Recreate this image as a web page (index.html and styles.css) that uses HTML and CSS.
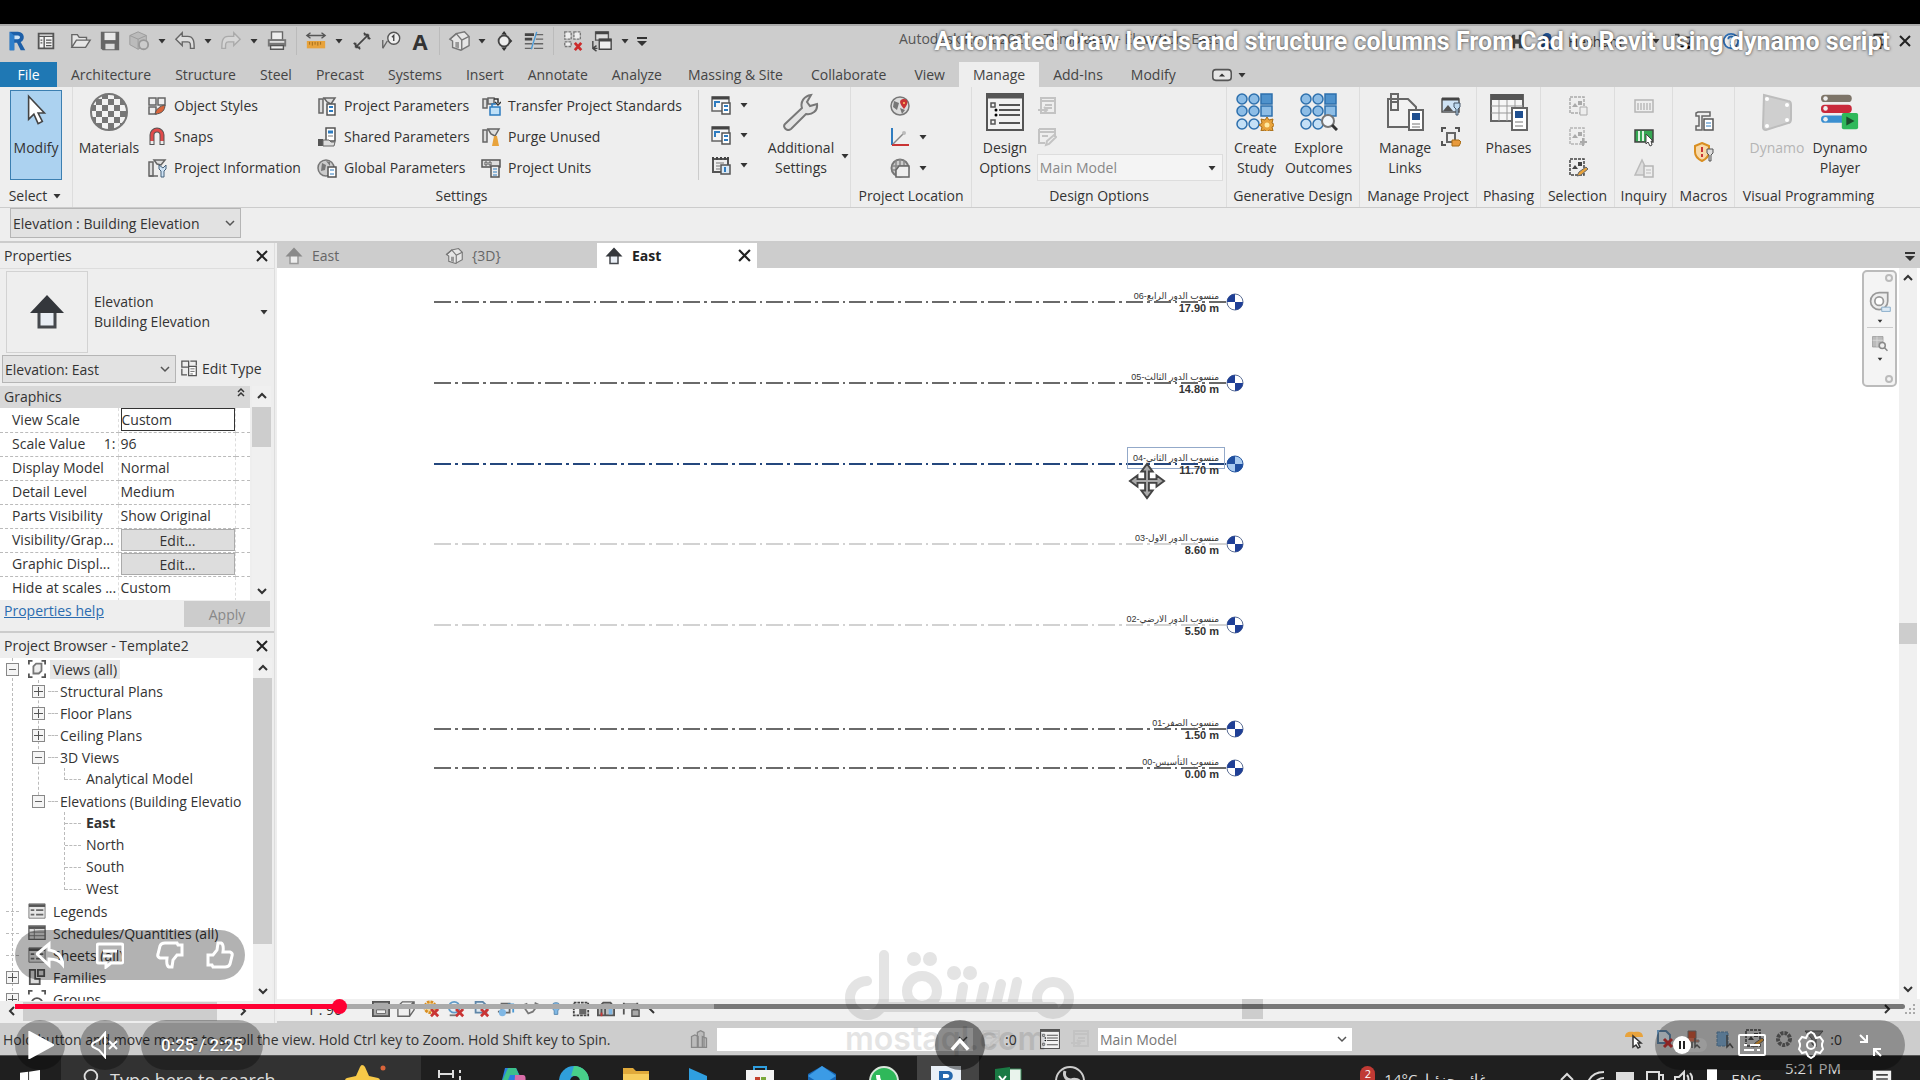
FILE: index.html
```html
<!DOCTYPE html>
<html lang="en">
  <head>
    <meta charset="utf-8">
    <title>Automated draw levels and structure columns From Cad to Revit using dynamo script</title>
    <link rel="stylesheet" href="styles.css">
  </head>
  <body>
    <!-- icon sprite -->
    <svg class="sprite" aria-hidden="true">
      <symbol id="i-caret" viewBox="0 0 12 12"><path d="M2.500 4h7L6 8.500z" fill="#333"/></symbol>
      <symbol id="i-down" viewBox="0 0 12 12"><path d="M2 4l4 4 4-4" fill="none" stroke="#555" stroke-width="1.500"/></symbol>
      <symbol id="i-sdown" viewBox="0 0 12 12"><path d="M2 4l4 4 4-4" fill="none" stroke="#333" stroke-width="2"/></symbol>
      <symbol id="i-sup" viewBox="0 0 12 12"><path d="M2 8l4-4 4 4" fill="none" stroke="#333" stroke-width="2"/></symbol>
      <symbol id="i-collapse" viewBox="0 0 12 12"><path d="M3 6l3-3 3 3M3 10l3-3 3 3" fill="none" stroke="#333" stroke-width="1.500"/></symbol>
      <symbol id="i-sleft" viewBox="0 0 12 12"><path d="M8 2L4 6l4 4" fill="none" stroke="#333" stroke-width="2"/></symbol>
      <symbol id="i-sright" viewBox="0 0 12 12"><path d="M4 2l4 4-4 4" fill="none" stroke="#333" stroke-width="2"/></symbol>
      <symbol id="i-x" viewBox="0 0 12 12"><path d="M1 1l10 10M11 1L1 11" fill="none" stroke="#222" stroke-width="2"/></symbol>
      <symbol id="i-r" viewBox="0 0 24 24"><path d="M4 2h9c8 0 8 10 3 11l5 9h-5l-4-8H9v8H4z" fill="#1d5fa8"/><path d="M9 6h4c3 0 3 4 0 4H9z" fill="#cfe3f5"/><path d="M4 2l5 4v16H4z" fill="#2f7fcb"/></symbol>
      <symbol id="i-panel" viewBox="0 0 24 24"><path d="M4 4h16v16H4z" fill="#f4f4f4" stroke="#555" stroke-width="2"/><path d="M4 7h16M10 7v13M12 11h6M12 14h6M12 17h6M6 11h2M6 14h2" stroke="#555" stroke-width="1.500"/></symbol>
      <symbol id="i-open" viewBox="0 0 24 24"><path d="M2 19V5h6l2 3h8v3M2 19l5-8h15l-5 8z" fill="#e6e6e6" stroke="#666" stroke-width="1.500"/></symbol>
      <symbol id="i-save" viewBox="0 0 24 24"><path d="M2 2h20v20H4l-2-2z" fill="#666"/><path d="M6 3h12v8H6z" fill="#e9e9e9"/><path d="M7 15h10v6H7z" fill="#ddd"/></symbol>
      <symbol id="i-sync" viewBox="0 0 24 24"><path d="M11 2l9 4v10l-9 5-9-5V6z" fill="#bbb" stroke="#999"/><path d="M2 6l9 4 9-4M11 10v11" fill="none" stroke="#999"/><circle cx="17" cy="16" r="5" fill="#ccc" stroke="#999" stroke-width="2"/></symbol>
      <symbol id="i-undo" viewBox="0 0 24 24"><path d="M2 10l7-7v4h6c7 0 7 7 7 13h-4c0-5 0-7-3-7H9v4z" fill="#ddd" stroke="#666" stroke-width="1.500"/></symbol>
      <symbol id="i-redo" viewBox="0 0 24 24"><path d="M22 10l-7-7v4H9c-7 0-7 7-7 13h4c0-5 0-7 3-7h6v4z" fill="#d6d6d6" stroke="#aaa" stroke-width="1.500"/></symbol>
      <symbol id="i-print" viewBox="0 0 24 24"><path d="M6 2h12v9H6z" fill="#eee" stroke="#666" stroke-width="1.500"/><path d="M2 10h20v8H2z" fill="#777"/><path d="M4 12h16v2H4z" fill="#ddd"/><path d="M5 17h14v4H5z" fill="#eee" stroke="#555" stroke-width="1.500"/></symbol>
      <symbol id="i-measure" viewBox="0 0 24 24"><path d="M2 6h20M6 3L2 6l4 3M18 3l4 3-4 3" fill="none" stroke="#555" stroke-width="1.500"/><path d="M2 12h20v8H2z" fill="#e8a33c"/><path d="M5 13v3M8 13v4M11 13v3M14 13v4M17 13v3" stroke="#9b6a1b"/></symbol>
      <symbol id="i-dim" viewBox="0 0 24 24"><path d="M5 19L19 5M14 3l7 7M3 14l7 7M19 5h-5M19 5v5M5 19h5M5 19v-5" fill="none" stroke="#444" stroke-width="1.800"/></symbol>
      <symbol id="i-tag" viewBox="0 0 24 24"><path d="M3 11v9M3 20l5-8" fill="none" stroke="#666" stroke-width="1.500"/><circle cx="15" cy="9" r="6.500" fill="#eee" stroke="#555" stroke-width="1.500"/><path d="M13 8l2-2v6" fill="none" stroke="#444" stroke-width="1.500"/></symbol>
      <symbol id="i-cube" viewBox="0 0 24 24"><path d="M3 8l8-5 10 4v10l-8 5-10-4z" fill="#e6e6e6" stroke="#777" stroke-width="1.500"/><path d="M3 8l10 4 8-5M13 12v10" fill="none" stroke="#777" stroke-width="1.500"/><path d="M14 13l6-4v8l-6 4z" fill="#999"/></symbol>
      <symbol id="i-house3d" viewBox="0 0 24 24"><path d="M2 10l7-6 9-2 5 5v10l-9 5-9-3v-7z" fill="#e6e6e6" stroke="#777" stroke-width="1.500"/><path d="M2 10l7-6 6 7v11M15 11l8-4" fill="none" stroke="#777" stroke-width="1.500"/><path d="M8 13h4v7l-4-1z" fill="#999"/></symbol>
      <symbol id="i-diamond" viewBox="0 0 24 24"><path d="M12 4l8 8-8 8z" fill="#333"/><circle cx="11" cy="12" r="6" fill="#eee" stroke="#444" stroke-width="2"/><path d="M11 1l3 4H8zM11 23l3-4H8z" fill="#333"/></symbol>
      <symbol id="i-thin" viewBox="0 0 24 24"><path d="M2 5h10M2 10h8" stroke="#444" stroke-width="3"/><path d="M2 15h8M2 20h8M14 5h8M14 10h8M12 15h10M12 20h10" stroke="#666" stroke-width="1.500"/><path d="M9 21l6-19" stroke="#4a9ad6" stroke-width="1.500"/></symbol>
      <symbol id="i-hide" viewBox="0 0 24 24"><path d="M3 2h7v8H3zM13 2h7v8h-7zM3 13h7v5H3z" fill="#eee" stroke="#777" stroke-width="1.500" stroke-dasharray="3 1"/><path d="M14 14l7 8M21 14l-7 8" stroke="#cc2b2b" stroke-width="3"/></symbol>
      <symbol id="i-switch" viewBox="0 0 24 24"><path d="M5 2h14v9H5z" fill="#ddd" stroke="#555" stroke-width="1.500"/><path d="M9 10h13v11H9z" fill="#eee" stroke="#444" stroke-width="1.500"/><path d="M9 11h13M5 3h14" stroke="#444" stroke-width="3"/><path d="M2 12v8h5M2 20l4-3M2 20l4 3" fill="none" stroke="#444" stroke-width="1.500"/></symbol>
      <symbol id="i-custom" viewBox="0 0 12 12"><path d="M1 2h10v2H1zM1 6h10L6 11z" fill="#333"/></symbol>
      <symbol id="i-cursor" viewBox="0 0 24 36"><path d="M5 3v22l5-5 4 9 4-2-4-8h6z" fill="#fff" stroke="#444" stroke-width="1.500"/></symbol>
      <symbol id="i-sphere" viewBox="0 0 38 38"><defs><pattern id="chk" width="12" height="12" patternUnits="userSpaceOnUse"><path d="M0 0h12v12H0z" fill="#f3f3f3"/><path d="M0 0h6v6H0zM6 6h6v6H6z" fill="#777"/></pattern></defs><circle cx="19" cy="19" r="18" fill="url(#chk)" stroke="#777" stroke-width="2"/></symbol>
      <symbol id="i-objstyles" viewBox="0 0 20 20"><path d="M2 2h7v7H2zM11 2h7v7h-7zM2 11h7v7H2z" fill="#eee" stroke="#666" stroke-width="1.500"/><path d="M8 18c1-5 5-8 10-9 0 5-3 9-10 9z" fill="#d9643a" stroke="#555"/></symbol>
      <symbol id="i-snaps" viewBox="0 0 20 20"><path d="M5 18V8a5 5 0 0 1 10 0v10" fill="none" stroke="#555" stroke-width="5"/><path d="M5 14V8a5 5 0 0 1 10 0v6" fill="none" stroke="#e04a4a" stroke-width="3"/><path d="M5 14v3M15 14v3" stroke="#eee" stroke-width="3"/></symbol>
      <symbol id="i-doc" viewBox="0 0 20 20"><path d="M2 3h4v14H2zM7 2h11l-4 6-4-2z" fill="#ddd" stroke="#666" stroke-width="1.500"/><path d="M10 8h8v11h-8z" fill="#fff" stroke="#555" stroke-width="1.500"/><path d="M12 11h4M12 15h4" stroke="#2e7cc0" stroke-width="2"/></symbol>
      <symbol id="i-info" viewBox="0 0 20 20"><path d="M2 4h4v14H2zM7 2h11l-4 5-4-1z" fill="#ddd" stroke="#666" stroke-width="1.500"/><path d="M2 18h9" stroke="#666" stroke-width="1.500"/><path d="M12 7v4l2 2v6h3v-6l2-2V7l-3 3z" fill="#cfe3f5" stroke="#44607a"/></symbol>
      <symbol id="i-shared" viewBox="0 0 20 20"><path d="M9 1h9v13H9z" fill="#fff" stroke="#555" stroke-width="1.500"/><path d="M11 5h5" stroke="#2e7cc0" stroke-width="3"/><path d="M11 9h5" stroke="#777"/><path d="M1 12h5v7H1z" fill="#555"/><path d="M6 13h6l2 2h4l-1 4H6z" fill="#ddd" stroke="#666"/></symbol>
      <symbol id="i-global" viewBox="0 0 20 20"><circle cx="9" cy="10" r="8" fill="#ccc" stroke="#777" stroke-width="1.500"/><path d="M5 5l4 2-1 5-4 1zM9 3l4 1v4z" fill="#777"/><path d="M11 9h8v10h-8z" fill="#fff" stroke="#555" stroke-width="1.500"/><path d="M13 12h4M13 16h4" stroke="#2e7cc0"/></symbol>
      <symbol id="i-transfer" viewBox="0 0 20 20"><path d="M2 3h4v9H2zM7 2h6v6H7z" fill="#ddd" stroke="#666" stroke-width="1.500"/><path d="M13 3h4v4M14 6l3 3 3-3" fill="none" stroke="#333" stroke-width="1.500"/><path d="M9 11h10v8H9zM11 11V8h4" fill="#bfe0f7" stroke="#2e7cc0" stroke-width="1.500"/></symbol>
      <symbol id="i-purge" viewBox="0 0 20 20"><path d="M2 3h4v12H2zM7 2h11l-4 7-4-2z" fill="#ddd" stroke="#666" stroke-width="1.500"/><path d="M13 9h3l2 10h-7z" fill="#e8a33c"/></symbol>
      <symbol id="i-units" viewBox="0 0 20 20"><path d="M1 2h18v7H1z" fill="#ddd" stroke="#555" stroke-width="1.500"/><path d="M4 4v3h2V4zM8 4v3h2V4z" fill="#fff" stroke="#555"/><path d="M10 8h8v11h-8z" fill="#eee" stroke="#555" stroke-width="1.500"/><path d="M12 11h4M12 14h4M12 17h4" stroke="#2e7cc0"/></symbol>
      <symbol id="i-struct" viewBox="0 0 20 20"><path d="M1 2h17v14H1z" fill="#f5f5f5" stroke="#666" stroke-width="1.500"/><path d="M1 3h17" stroke="#444" stroke-width="3"/><path d="M4 12V7h5" fill="none" stroke="#2e7cc0" stroke-width="2"/><path d="M11 8h8v11h-8z" fill="#fff" stroke="#555" stroke-width="1.500"/><path d="M13 11h4M13 15h4" stroke="#2e7cc0" stroke-width="2"/></symbol>
      <symbol id="i-grid" viewBox="0 0 20 20"><path d="M2 4h15v13H2z" fill="#eee" stroke="#555" stroke-width="2"/><path d="M2 2v3M6 2v3M10 2v3M14 2v3M17 2v3" stroke="#444" stroke-width="2"/><path d="M5 8h8M5 11h4M5 14h4" stroke="#777"/><path d="M10 10h9v9h-9z" fill="#dbe9f5" stroke="#555" stroke-width="1.500"/><path d="M14 12v5" stroke="#2e7cc0" stroke-width="2"/></symbol>
      <symbol id="i-wrench" viewBox="0 0 38 38"><path d="M3 31l17-16c-2-6 2-12 9-13l-4 7 3 4 7-2c1 7-5 11-11 10L9 36c-4 3-9-2-6-5z" fill="#e4e4e4" stroke="#777" stroke-width="2"/></symbol>
      <symbol id="i-globe" viewBox="0 0 20 20"><circle cx="10" cy="10" r="9" fill="#ddd" stroke="#777" stroke-width="1.500"/><path d="M4 5l5 2-2 7-4-3zM10 12l5 2-3 4z" fill="#777"/><path d="M14 13c-7-8-3-10 0-10s6 3 0 10z" fill="#c93434"/><circle cx="14" cy="7" r="1" fill="#fc6"/></symbol>
      <symbol id="i-coord" viewBox="0 0 20 20"><path d="M2 1v17" stroke="#2e7cc0" stroke-width="2"/><path d="M2 18h17" stroke="#c93434" stroke-width="2"/><path d="M3 17L14 6" stroke="#888" stroke-width="1.500"/><circle cx="14" cy="6" r="2" fill="#bbb"/></symbol>
      <symbol id="i-position" viewBox="0 0 20 20"><circle cx="10" cy="10" r="8.500" fill="#ccc" stroke="#777" stroke-width="2"/><path d="M2 8h16M2 12h5M10 1v7M6 2v16M14 2v6" stroke="#888" stroke-width="1.500"/><path d="M6 12l3-4h10v11H6z" fill="#eee" stroke="#666" stroke-width="1.500"/></symbol>
      <symbol id="i-options" viewBox="0 0 38 38"><path d="M1 1h36v36H1z" fill="#f2f2f2" stroke="#555" stroke-width="2"/><path d="M1 3h36" stroke="#555" stroke-width="5"/><path d="M13 12h21M13 17h21M13 22h21M13 30h21" stroke="#555" stroke-width="2"/><path d="M5 10h4v4H5zM5 27h4v4H5z" fill="none" stroke="#555" stroke-width="1.500"/><circle cx="10" cy="17" r="1.500"/><circle cx="10" cy="22" r="1.500"/></symbol>
      <symbol id="i-addset" viewBox="0 0 20 20"><path d="M4 2h14v15H4zM4 5h14M8 9h7M8 12h7M1 14h8M7 11l3 3-3 3" fill="none" stroke="#c3c3c3" stroke-width="2"/></symbol>
      <symbol id="i-pick" viewBox="0 0 20 20"><path d="M2 2h16v8M2 2v14h6M2 5h16M5 9h6M9 18l1-4 7-6 2 2-7 7z" fill="none" stroke="#c3c3c3" stroke-width="2"/></symbol>
      <symbol id="i-dots" viewBox="0 0 38 38"><g fill="#8dbde6" stroke="#2e70ad" stroke-width="1.500"><circle cx="6" cy="6" r="5"/><circle cx="18" cy="6" r="5"/><path d="M25 1h11v10H25z" fill="#4f92cc"/><circle cx="6" cy="18" r="5"/><circle cx="18" cy="18" r="5"/><path d="M25 13h11v10H25z"/><circle cx="6" cy="31" r="5" fill="#c4e0f6"/><circle cx="18" cy="31" r="5" fill="#c4e0f6"/></g></symbol>
      <symbol id="i-create" viewBox="0 0 38 38"><use href="#i-dots"/><path d="M31 24l2 3 4-1-1 4 3 2-3 2 1 4-4-1-2 3-2-3-4 1 1-4-3-2 3-2-1-4 4 1z" fill="#e8a33c" stroke="#a66a12"/><circle cx="31" cy="32" r="2.500" fill="#ffeaa0"/></symbol>
      <symbol id="i-explore" viewBox="0 0 38 38"><use href="#i-dots"/><circle cx="28" cy="28" r="6" fill="#f2f6fa" stroke="#777" stroke-width="2"/><path d="M32 32l5 5" stroke="#333" stroke-width="3"/></symbol>
      <symbol id="i-links" viewBox="0 0 38 38"><path d="M2 6h20l8 8v20H2z" fill="#f2f2f2" stroke="#666" stroke-width="2"/><path d="M5 1h7v8H5zM5 9h7v8H5z" fill="none" stroke="#666" stroke-width="2"/><path d="M23 17h14v20H23z" fill="#fff" stroke="#666" stroke-width="2"/><path d="M26 20h8v7h-8z" fill="#1f4f8f"/><path d="M26 31h8M26 34h8" stroke="#777"/></symbol>
      <symbol id="i-image" viewBox="0 0 20 20"><path d="M1 3h17v13H1z" fill="#cfe3f5" stroke="#555" stroke-width="1.500"/><path d="M1 3h17" stroke="#444" stroke-width="3"/><path d="M2 15l5-6 5 6z" fill="#555"/><path d="M13 7v4l2 2v6h2v-6l2-2V7z" fill="#bcd8ef" stroke="#456"/></symbol>
      <symbol id="i-decal" viewBox="0 0 20 20"><path d="M1 5V1h4M14 1h4v4M1 14v4h4" fill="none" stroke="#555" stroke-width="2"/><path d="M6 6h8v9H6z" fill="#eee" stroke="#666" stroke-width="2"/><path d="M11 13h7l2 2-2 4h-7z" fill="#e89a3c" stroke="#a66a12"/></symbol>
      <symbol id="i-phases" viewBox="0 0 38 38"><path d="M1 2h32v26H1z" fill="#f6f6f6" stroke="#666" stroke-width="2"/><path d="M1 4h32" stroke="#555" stroke-width="6"/><path d="M1 13h32M1 20h32M9 7v21M17 7v21M25 7v21" stroke="#999"/><path d="M22 15h15v22H22z" fill="#fff" stroke="#666" stroke-width="2"/><path d="M25 18h8v7h-8z" fill="#1f4f8f"/><path d="M25 29h8M25 33h8" stroke="#777"/></symbol>
      <symbol id="i-sel" viewBox="0 0 20 20"><path d="M2 1h14v16H2z" fill="none" stroke="#aaa" stroke-width="1.500" stroke-dasharray="3 1"/><path d="M4 11l3-4 3 4zM10 5h4v4h-4z" fill="#aaa"/><path d="M12 11h7v8h-7z" fill="#eee" stroke="#aaa"/></symbol>
      <symbol id="i-selload" viewBox="0 0 20 20"><path d="M2 1h14v16H2z" fill="none" stroke="#b5b5b5" stroke-width="1.500" stroke-dasharray="3 1"/><path d="M4 11l3-4 3 4zM10 5h4v4h-4z" fill="#aaa"/><path d="M15 11v8M12 15h7" stroke="#aaa" stroke-width="2"/></symbol>
      <symbol id="i-seledit" viewBox="0 0 20 20"><path d="M2 1h14v16H2z" fill="none" stroke="#444" stroke-width="1.500" stroke-dasharray="3 1"/><path d="M4 11l3-4 3 4zM10 4h4v4h-4z" fill="#444"/><path d="M9 18l2-4 7-5 2 2-7 6z" fill="#e8a33c" stroke="#666"/></symbol>
      <symbol id="i-ids" viewBox="0 0 20 20"><path d="M1 4h18v12H1z" fill="#eee" stroke="#b5b5b5" stroke-width="1.500"/><path d="M4 7v7M7 7v7M10 7v7M13 7v7M16 7v7" stroke="#bbb" stroke-width="1.500"/></symbol>
      <symbol id="i-idsel" viewBox="0 0 20 20"><path d="M1 3h18v12H1z" fill="#35a853" stroke="#444" stroke-width="1.500"/><path d="M5 4v10M9 4v10" stroke="#dff3e4" stroke-width="2"/><path d="M12 7v10l2-2 2 4 2-1-1-4h2z" fill="#fff" stroke="#444"/></symbol>
      <symbol id="i-warn" viewBox="0 0 20 20"><path d="M1 17L8 2l7 15z" fill="#ddd" stroke="#bbb" stroke-width="1.500"/><path d="M10 8h9v11h-9z" fill="#eee" stroke="#b5b5b5" stroke-width="1.500"/><path d="M12 12h5M12 15h5" stroke="#bbb"/></symbol>
      <symbol id="i-script" viewBox="0 0 20 20"><path d="M4 1h12v4H8v14H2v-4h3V5H2V2z" fill="#eee" stroke="#666" stroke-width="1.500"/><path d="M10 8h9v11h-9z" fill="#fff" stroke="#555" stroke-width="1.500"/><path d="M12 12h5M12 15h5" stroke="#2e7cc0"/></symbol>
      <symbol id="i-shield" viewBox="0 0 20 20"><path d="M8 1l7 3v6c0 4-3 7-7 9-4-2-7-5-7-9V4z" fill="#f8d9a8" stroke="#d98f22" stroke-width="2"/><path d="M8 5v5M8 12v3" stroke="#c93434" stroke-width="2"/><path d="M13 7v4l2 2v6h2v-6l2-2V7z" fill="#ddd" stroke="#555"/></symbol>
      <symbol id="i-dynamo" viewBox="0 0 38 38"><path d="M6 2l24 6c2 0 3 2 3 4v14c0 2-1 4-3 4L8 37c-2 0-3-1-3-3z" fill="#cfcfcf" stroke="#bdbdbd" stroke-width="2"/><circle cx="9" cy="6" r="2" fill="#fff"/><circle cx="29" cy="12" r="2" fill="#fff"/><circle cx="9" cy="33" r="2" fill="#fff"/><circle cx="29" cy="27" r="2" fill="#fff"/></symbol>
      <symbol id="i-player" viewBox="0 0 42 38"><rect y="0" width="34" height="8" rx="4" fill="#7d7468"/><rect y="11" width="34" height="9" rx="4" fill="#c9283a"/><rect y="23" width="30" height="8" rx="4" fill="#3b8fd0"/><circle cx="5" cy="4" r="2.500" fill="#eee"/><circle cx="5" cy="15" r="2.500" fill="#eee"/><circle cx="5" cy="27" r="2.500" fill="#eee"/><rect x="23" y="20" width="18" height="18" rx="2" fill="#2fb85a"/><path d="M28 24l9 5-9 5z" fill="#1b4d2c"/></symbol>
      <symbol id="i-min" viewBox="0 0 26 18"><rect x="1" y="2" width="24" height="14" rx="4" fill="#e6e6e6" stroke="#555" stroke-width="2"/><path d="M9 11l4-4 4 4z" fill="#333"/></symbol>
      <symbol id="i-house" viewBox="0 0 36 36"><path d="M10 16h16v17H10z" fill="#e9eef5" stroke="#45484d" stroke-width="3"/><path d="M18 1l17 18H1z" fill="#34373c"/></symbol>
      <symbol id="i-house-g" viewBox="0 0 36 36"><path d="M10 16h16v17H10z" fill="#eee" stroke="#999" stroke-width="3"/><path d="M18 1l17 18H1z" fill="#8a8a8a"/></symbol>
      <symbol id="i-type" viewBox="0 0 20 20"><path d="M1 2h8v7H1zM11 2h7v5M1 11v7h6" fill="none" stroke="#555" stroke-width="1.500"/><path d="M9 8h9v11H9z" fill="#fff" stroke="#555" stroke-width="1.500"/><path d="M11 11h5M11 14h5M11 17h3" stroke="#555"/></symbol>
      <symbol id="i-views" viewBox="0 0 20 20"><path d="M1 5V1h4M15 1h4v4M1 15v4h4M15 19h4v-4" fill="none" stroke="#555" stroke-width="2"/><path d="M6 7l3-3h6v8l-3 3H6z" fill="#eee" stroke="#777" stroke-width="2"/></symbol>
      <symbol id="i-sheet" viewBox="0 0 20 20"><path d="M1 2h18v16H1z" fill="#e6e6e6" stroke="#777"/><path d="M1 4h18" stroke="#555" stroke-width="3"/><path d="M3 9h4M3 14h4M9 9h8M9 14h8" stroke="#666" stroke-width="2"/></symbol>
      <symbol id="i-sched" viewBox="0 0 20 20"><path d="M1 2h18v15H1z" fill="#ddd" stroke="#666" stroke-width="1.500"/><path d="M1 4h18" stroke="#555" stroke-width="3"/><path d="M1 9h18M1 13h18M7 5v12" stroke="#777"/></symbol>
      <symbol id="i-fam" viewBox="0 0 20 20"><path d="M2 2h6v10h5v6H2zM11 2h7v7h-7z" fill="#ddd" stroke="#555" stroke-width="2"/></symbol>
      <symbol id="i-group" viewBox="0 0 20 20"><path d="M1 5V1h4M15 1h4v4M4 15a6 6 0 0 1 12 0" fill="none" stroke="#555" stroke-width="2"/></symbol>
      <symbol id="i-bubble" viewBox="0 0 18 18"><circle cx="9" cy="9" r="8" fill="#fff" stroke="#5d6f95"/><path d="M9 9V1a8 8 0 0 0-8 8zM9 9v8a8 8 0 0 0 8-8z" fill="#1f3f96"/></symbol>
      <symbol id="i-bubble-on" viewBox="0 0 18 18"><circle cx="9" cy="9" r="8" fill="#a9cbf0" stroke="#2b5aa0"/><path d="M9 9V1a8 8 0 0 0-8 8zM9 9v8a8 8 0 0 0 8-8z" fill="#1f4fa0"/></symbol>
      <symbol id="i-x2" viewBox="0 0 20 20"><path d="M4 2h8l4 4v8H4z" fill="#dfe8f0" stroke="#5f86a8" stroke-width="2"/><path d="M10 10l8 8M18 10l-8 8" stroke="#c93434" stroke-width="3"/></symbol>
      <symbol id="i-shadow" viewBox="0 0 20 20"><circle cx="8" cy="8" r="6" fill="#e6eef5" stroke="#5f9bc8" stroke-width="2"/><path d="M3 17h8" stroke="#777" stroke-width="2"/><path d="M10 10l8 8M18 10l-8 8" stroke="#c93434" stroke-width="3"/></symbol>
      <symbol id="i-crop" viewBox="0 0 20 20"><path d="M1 13h4M5 4h9v10H5z" fill="#dfe8f0" stroke="#666" stroke-width="2"/><circle cx="6" cy="14" r="4" fill="#7fb7e4"/><path d="M12 5h6v9" fill="none" stroke="#4a9ad6" stroke-width="2"/></symbol>
      <symbol id="i-sun" viewBox="0 0 20 20"><circle cx="9" cy="8" r="6" fill="#f3d9a0" stroke="#d98f22" stroke-width="3" stroke-dasharray="3 1"/><path d="M10 10l8 8M18 10l-8 8" stroke="#c93434" stroke-width="3"/></symbol>
      <symbol id="i-box" viewBox="0 0 20 20"><path d="M1 7l5-5h13v9l-5 7H1zM1 7h13v11M14 7l5-5" fill="#eee" stroke="#666" stroke-width="1.500"/></symbol>
      <symbol id="i-film" viewBox="0 0 20 20"><path d="M1 2h18v16H1z" fill="#aaa" stroke="#555" stroke-width="2"/><path d="M5 5h10v4H5zM5 11h10v4H5z" fill="#eee" stroke="#666"/></symbol>
      <symbol id="i-glass" viewBox="0 0 20 20"><path d="M1 6l6 9 5-2 6-8-4-2M1 6l5-2" fill="none" stroke="#777" stroke-width="2"/></symbol>
      <symbol id="i-bulb" viewBox="0 0 20 20"><path d="M10 3c6 0 5 6 2 9v4H8v-4C5 9 4 3 10 3z" fill="#7fb7e4" stroke="#5585ad"/></symbol>
      <symbol id="i-temp" viewBox="0 0 20 20"><path d="M2 3h16v14H2z" fill="none" stroke="#444" stroke-width="2" stroke-dasharray="3 1"/><path d="M8 9h8v7H8z" fill="#666"/></symbol>
      <symbol id="i-persons" viewBox="0 0 22 24"><path d="M2 9l4-2 4 2v13H2zM9 4l4-2 4 2v18H9zM15 9l5 2v11h-5z" fill="#bbb" stroke="#888" stroke-width="1.500"/></symbol>
      <symbol id="i-analytic" viewBox="0 0 20 20"><path d="M1 9l6-6h8l4 5v9H1z" fill="#bbb" stroke="#555" stroke-width="2"/><path d="M5 8v9M9 6v11" stroke="#555" stroke-width="2"/><path d="M5 14v4" stroke="#c93434" stroke-width="2"/><path d="M13 9h4v7h-4z" fill="#7fb7e4"/></symbol>
      <symbol id="i-lock" viewBox="0 0 20 20"><path d="M2 3v13M2 5h15M17 3v5" fill="none" stroke="#555" stroke-width="2"/><path d="M11 11h8v7h-8zM13 11V8h4v3" fill="#aaa" stroke="#555" stroke-width="1.500"/></symbol>
      <symbol id="i-wheel" viewBox="0 0 28 28"><path d="M13 3h10v10a10 10 0 1 1-10-10z" fill="#eee" stroke="#999" stroke-width="2"/><circle cx="13" cy="13" r="5" fill="#fff" stroke="#999" stroke-width="2"/><path d="M16 20h10v5H16z" fill="#dbe9f5" stroke="#7fa6c6"/></symbol>
      <symbol id="i-zoomreg" viewBox="0 0 24 24"><path d="M2 2h14v14H2z" fill="#bbb" stroke="#999"/><path d="M2 7h14M8 2v14" stroke="#ddd"/><circle cx="15" cy="14" r="4" fill="#eee" stroke="#888" stroke-width="2"/><path d="M18 17l4 4" stroke="#888" stroke-width="2"/></symbol>
      <symbol id="i-move" viewBox="0 0 40 40"><path d="M20 2l6 8h-4v8h8v-4l8 6-8 6v-4h-8v8h4l-6 8-6-8h4v-8h-8v4l-8-6 8-6v4h8v-8h-4z" fill="#aaa" stroke="#444" stroke-width="2"/></symbol>
      <symbol id="i-drag" viewBox="0 0 20 20"><path d="M1 8c0-5 4-6 9-5 5-1 9 0 9 5z" fill="#e8a33c"/><path d="M9 7v11l3-2 2 3 2-1-2-4h3z" fill="#fff" stroke="#333" stroke-width="1.500"/></symbol>
      <symbol id="i-pin" viewBox="0 0 20 20"><path d="M4 2h8v9h3v2H2v-2h2z" fill="#c9583a" stroke="#777"/><path d="M8 13v6M11 9v9l2-2 3 3" stroke="#444" fill="none" stroke-width="1.500"/></symbol>
      <symbol id="i-face" viewBox="0 0 20 20"><path d="M3 3h11v14H3z" fill="#7fa9cf" stroke="#5f86a8" stroke-dasharray="3 1"/><path d="M13 6v12l3-3 3 4" fill="none" stroke="#555" stroke-width="1.500"/></symbol>
      <symbol id="i-gear" viewBox="0 0 20 20"><circle cx="10" cy="10" r="6" fill="none" stroke="#666" stroke-width="4" stroke-dasharray="3 1"/></symbol>
      <symbol id="i-funnel" viewBox="0 0 20 20"><path d="M1 2h18l-7 8v8l-4-3v-5z" fill="#888" stroke="#555"/></symbol>
    </svg>

    <div class="player">
      <div class="app">
        <header class="titlebar">
          <div class="qat">
            <svg><use href="#i-r"/></svg>
            <svg class="qat-first"><use href="#i-panel"/></svg>
            <svg><use href="#i-open"/></svg>
            <svg><use href="#i-save"/></svg>
            <svg><use href="#i-sync"/></svg>
            <svg class="caret"><use href="#i-caret"/></svg>
            <svg><use href="#i-undo"/></svg>
            <svg class="caret"><use href="#i-caret"/></svg>
            <svg><use href="#i-redo"/></svg>
            <svg class="caret"><use href="#i-caret"/></svg>
            <svg><use href="#i-print"/></svg>
            <i></i>
            <svg><use href="#i-measure"/></svg>
            <svg class="caret"><use href="#i-caret"/></svg>
            <svg><use href="#i-dim"/></svg>
            <svg><use href="#i-tag"/></svg>
            <b>A</b>
            <i></i>
            <svg><use href="#i-house3d"/></svg>
            <svg class="caret"><use href="#i-caret"/></svg>
            <svg><use href="#i-diamond"/></svg>
            <svg><use href="#i-thin"/></svg>
            <i></i>
            <svg><use href="#i-hide"/></svg>
            <svg><use href="#i-switch"/></svg>
            <svg class="caret"><use href="#i-caret"/></svg>
            <svg class="caret"><use href="#i-custom"/></svg>
          </div>
          <div class="window-title">Autodesk Revit 2021 - Template2 - Elevation: East</div>
          <div class="infocenter">
            <svg viewBox="0 0 20 20"><path d="M2 18V9l3-6h3v15zM12 18V3h3l3 6v9zM8 8h4v5H8z" fill="#444"/></svg>
            <svg viewBox="0 0 20 20"><circle cx="10" cy="6" r="5" fill="#1f4f8f"/><path d="M1 19c0-9 18-9 18 0z" fill="#1f4f8f"/></svg>
            <span>Hesham</span>
            <svg class="caret"><use href="#i-caret"/></svg>
            <svg viewBox="0 0 20 20"><path d="M1 3h4l3 10h9l2-7H6" fill="none" stroke="#444" stroke-width="2"/><circle cx="9" cy="17" r="2"/><circle cx="16" cy="17" r="2"/></svg>
            <svg class="help" viewBox="0 0 20 20"><circle cx="10" cy="10" r="8" fill="#eee" stroke="#2e6cb0" stroke-width="2"/><path d="M7 8c0-4 6-4 6 0 0 2-3 2-3 4M10 14v2" fill="none" stroke="#2e6cb0" stroke-width="2"/></svg>
            <svg class="win" viewBox="0 0 20 20"><path d="M3 7h11v11H3zM7 7V3h11v11h-4" fill="none" stroke="#333" stroke-width="2"/></svg>
            <svg class="close"><use href="#i-x"/></svg>
          </div>
        </header>

        <nav class="tabs">
          <button class="file">File</button>
          <button>Architecture</button>
          <button>Structure</button>
          <button>Steel</button>
          <button>Precast</button>
          <button>Systems</button>
          <button>Insert</button>
          <button>Annotate</button>
          <button>Analyze</button>
          <button>Massing &amp; Site</button>
          <button>Collaborate</button>
          <button>View</button>
          <button class="active">Manage</button>
          <button>Add-Ins</button>
          <button>Modify</button>
          <svg class="min"><use href="#i-min"/></svg>
          <svg class="caret"><use href="#i-caret"/></svg>
        </nav>

        <section class="ribbon">
          <div class="panel">
            <div class="tools"><button class="big modify"><svg><use href="#i-cursor"/></svg>Modify</button></div>
            <h2>Select <svg class="caret"><use href="#i-caret"/></svg></h2>
          </div>
          <div class="panel">
            <div class="tools settings">
              <button class="big"><svg><use href="#i-sphere"/></svg>Materials</button>
              <div class="stack first">
                <button><svg><use href="#i-objstyles"/></svg>Object Styles</button>
                <button><svg><use href="#i-snaps"/></svg>Snaps</button>
                <button><svg><use href="#i-info"/></svg>Project Information</button>
              </div>
              <div class="stack">
                <button><svg><use href="#i-doc"/></svg>Project Parameters</button>
                <button><svg><use href="#i-shared"/></svg>Shared Parameters</button>
                <button><svg><use href="#i-global"/></svg>Global Parameters</button>
              </div>
              <div class="stack">
                <button><svg><use href="#i-transfer"/></svg>Transfer Project Standards</button>
                <button><svg><use href="#i-purge"/></svg>Purge Unused</button>
                <button><svg><use href="#i-units"/></svg>Project Units</button>
              </div>
              <div class="stack ruled">
                <button aria-label="Structural settings"><svg><use href="#i-struct"/></svg><svg class="caret"><use href="#i-caret"/></svg></button>
                <button aria-label="MEP settings"><svg><use href="#i-struct"/></svg><svg class="caret"><use href="#i-caret"/></svg></button>
                <button aria-label="Panel schedule templates"><svg><use href="#i-grid"/></svg><svg class="caret"><use href="#i-caret"/></svg></button>
              </div>
              <button class="big"><svg><use href="#i-wrench"/></svg>Additional<br>Settings</button>
              <svg class="caret"><use href="#i-caret"/></svg>
            </div>
            <h2>Settings</h2>
          </div>
          <div class="panel">
            <div class="tools location">
              <div class="stack">
                <button aria-label="Location"><svg><use href="#i-globe"/></svg></button>
                <button aria-label="Coordinates"><svg><use href="#i-coord"/></svg><svg class="caret"><use href="#i-caret"/></svg></button>
                <button aria-label="Position"><svg><use href="#i-position"/></svg><svg class="caret"><use href="#i-caret"/></svg></button>
              </div>
            </div>
            <h2>Project Location</h2>
          </div>
          <div class="panel">
            <div class="tools design">
              <button class="big"><svg><use href="#i-options"/></svg>Design<br>Options</button>
              <div class="stack">
                <button aria-label="Add to set"><svg><use href="#i-addset"/></svg></button>
                <button aria-label="Pick to edit"><svg><use href="#i-pick"/></svg></button>
                <label class="select"><select aria-label="Active design option"><option>Main Model</option></select><svg class="caret"><use href="#i-caret"/></svg></label>
              </div>
            </div>
            <h2>Design Options</h2>
          </div>
          <div class="panel">
            <div class="tools">
              <button class="big"><svg><use href="#i-create"/></svg>Create<br>Study</button>
              <button class="big"><svg><use href="#i-explore"/></svg>Explore<br>Outcomes</button>
            </div>
            <h2>Generative Design</h2>
          </div>
          <div class="panel">
            <div class="tools project">
              <button class="big"><svg><use href="#i-links"/></svg>Manage<br>Links</button>
              <div class="stack">
                <button aria-label="Manage images"><svg><use href="#i-image"/></svg></button>
                <button aria-label="Decal types"><svg><use href="#i-decal"/></svg></button>
              </div>
            </div>
            <h2>Manage Project</h2>
          </div>
          <div class="panel">
            <div class="tools"><button class="big"><svg><use href="#i-phases"/></svg>Phases</button></div>
            <h2>Phasing</h2>
          </div>
          <div class="panel">
            <div class="tools">
              <div class="stack">
                <button aria-label="Save selection"><svg><use href="#i-sel"/></svg></button>
                <button aria-label="Load selection"><svg><use href="#i-selload"/></svg></button>
                <button aria-label="Edit selection"><svg><use href="#i-seledit"/></svg></button>
              </div>
            </div>
            <h2>Selection</h2>
          </div>
          <div class="panel">
            <div class="tools">
              <div class="stack">
                <button aria-label="IDs of selection"><svg><use href="#i-ids"/></svg></button>
                <button aria-label="Select by ID"><svg><use href="#i-idsel"/></svg></button>
                <button aria-label="Warnings"><svg><use href="#i-warn"/></svg></button>
              </div>
            </div>
            <h2>Inquiry</h2>
          </div>
          <div class="panel">
            <div class="tools">
              <div class="stack middle">
                <button aria-label="Macro manager"><svg><use href="#i-script"/></svg></button>
                <button aria-label="Macro security"><svg><use href="#i-shield"/></svg></button>
              </div>
            </div>
            <h2>Macros</h2>
          </div>
          <div class="panel">
            <div class="tools">
              <button class="big" disabled><svg><use href="#i-dynamo"/></svg>Dynamo</button>
              <button class="big"><svg><use href="#i-player"/></svg>Dynamo<br>Player</button>
            </div>
            <h2>Visual Programming</h2>
          </div>
        </section>

        <div class="options-bar">
          <label class="select"><select aria-label="Type selector"><option>Elevation : Building Elevation</option></select><svg class="caret"><use href="#i-down"/></svg></label>
        </div>

        <main class="workspace">
          <aside class="side">
            <section class="properties">
              <h3>Properties <svg><use href="#i-x"/></svg></h3>
              <div class="type">
                <div class="thumb"><svg><use href="#i-house"/></svg></div>
                <p>Elevation<br>Building Elevation</p>
                <svg class="caret"><use href="#i-caret"/></svg>
              </div>
              <div class="instance">
                <label class="select"><select aria-label="Instance"><option>Elevation: East</option></select><svg class="caret"><use href="#i-down"/></svg></label>
                <button><svg><use href="#i-type"/></svg>Edit Type</button>
              </div>
              <div class="props">
                <div>
                  <div class="group">Graphics <svg class="caret"><use href="#i-collapse"/></svg></div>
                  <table>
                    <tr><th>View Scale</th><td><input aria-label="View Scale" value="Custom"></td><td></td></tr>
                    <tr><th>Scale Value <span>1:</span></th><td>96</td><td></td></tr>
                    <tr><th>Display Model</th><td>Normal</td><td></td></tr>
                    <tr><th>Detail Level</th><td>Medium</td><td></td></tr>
                    <tr><th>Parts Visibility</th><td>Show Original</td><td></td></tr>
                    <tr><th>Visibility/Grap...</th><td><button>Edit...</button></td><td></td></tr>
                    <tr><th>Graphic Displ...</th><td><button>Edit...</button></td><td></td></tr>
                    <tr><th>Hide at scales ...</th><td>Custom</td><td></td></tr>
                  </table>
                </div>
                <div class="vscroll">
                  <svg><use href="#i-sup"/></svg>
                  <div class="thumb-bar short"></div>
                  <svg><use href="#i-sdown"/></svg>
                </div>
              </div>
              <div class="props-foot">
                <a href="#help">Properties help</a>
                <button disabled>Apply</button>
              </div>
            </section>

            <section class="browser">
              <h3>Project Browser - Template2 <svg><use href="#i-x"/></svg></h3>
              <div class="browser-body">
                <ul class="tree">
                  <li><span class="row"><i class="toggle"></i><svg><use href="#i-views"/></svg><span class="hl">Views (all)</span></span>
                    <ul class="branch">
                      <li><span class="row"><i class="toggle plus"></i>Structural Plans</span></li>
                      <li><span class="row"><i class="toggle plus"></i>Floor Plans</span></li>
                      <li><span class="row"><i class="toggle plus"></i>Ceiling Plans</span></li>
                      <li><span class="row"><i class="toggle"></i>3D Views</span>
                        <ul class="leaves"><li>Analytical Model</li></ul>
                      </li>
                      <li><span class="row"><i class="toggle"></i>Elevations (Building Elevatio</span>
                        <ul class="leaves"><li><b>East</b></li><li>North</li><li>South</li><li>West</li></ul>
                      </li>
                    </ul>
                  </li>
                  <li><span class="row"><i class="no-toggle"></i><svg><use href="#i-sheet"/></svg>Legends</span></li>
                  <li><span class="row"><i class="no-toggle"></i><svg><use href="#i-sched"/></svg>Schedules/Quantities (all)</span></li>
                  <li><span class="row"><i class="no-toggle"></i><svg><use href="#i-sheet"/></svg>Sheets (all)</span></li>
                  <li><span class="row"><i class="toggle plus"></i><svg><use href="#i-fam"/></svg>Families</span></li>
                  <li><span class="row"><i class="toggle plus"></i><svg><use href="#i-group"/></svg>Groups</span></li>
                </ul>
                <div class="vscroll">
                  <svg><use href="#i-sup"/></svg>
                  <div class="thumb-bar long"></div>
                  <svg><use href="#i-sdown"/></svg>
                </div>
              </div>
              <div class="hscroll">
                <svg><use href="#i-sleft"/></svg>
                <div class="thumb-bar"></div>
                <svg><use href="#i-sright"/></svg>
              </div>
            </section>
          </aside>

          <section class="documents">
            <div class="doc-tabs">
              <button><svg><use href="#i-house-g"/></svg>East</button>
              <button><svg><use href="#i-house3d"/></svg>{3D}</button>
              <button class="active"><svg><use href="#i-house"/></svg>East<svg class="x"><use href="#i-x"/></svg></button>
              <svg class="caret"><use href="#i-custom"/></svg>
            </div>
            <div class="view">
              <div class="canvas">
                <div class="level l06"><svg class="line"><line x2="100%" y1="1" y2="1"/></svg><svg class="bubble"><use href="#i-bubble"/></svg><span class="name" dir="rtl">منسوب الدور الرابع-06</span><span class="height">17.90 m</span></div>
                <div class="level l05"><svg class="line"><line x2="100%" y1="1" y2="1"/></svg><svg class="bubble"><use href="#i-bubble"/></svg><span class="name" dir="rtl">منسوب الدور الثالث-05</span><span class="height">14.80 m</span></div>
                <div class="level l04 selected"><svg class="line"><line x2="100%" y1="1" y2="1"/></svg><svg class="bubble"><use href="#i-bubble-on"/></svg><span class="name" dir="rtl">منسوب الدور الثاني-04</span><span class="height">11.70 m</span></div>
                <div class="level l03 faded"><svg class="line"><line x2="100%" y1="1" y2="1"/></svg><svg class="bubble"><use href="#i-bubble"/></svg><span class="name" dir="rtl">منسوب الدور الاول-03</span><span class="height">8.60 m</span></div>
                <div class="level l02 faded"><svg class="line"><line x2="100%" y1="1" y2="1"/></svg><svg class="bubble"><use href="#i-bubble"/></svg><span class="name" dir="rtl">منسوب الدور الارضي-02</span><span class="height">5.50 m</span></div>
                <div class="level l01"><svg class="line"><line x2="100%" y1="1" y2="1"/></svg><svg class="bubble"><use href="#i-bubble"/></svg><span class="name" dir="rtl">منسوب الصفر-01</span><span class="height">1.50 m</span></div>
                <div class="level l00"><svg class="line"><line x2="100%" y1="1" y2="1"/></svg><svg class="bubble"><use href="#i-bubble"/></svg><span class="name" dir="rtl">منسوب التأسيس-00</span><span class="height">0.00 m</span></div>
                <svg class="move"><use href="#i-move"/></svg>
                <div class="navbar">
                  <i></i>
                  <svg><use href="#i-wheel"/></svg>
                  <svg class="caret"><use href="#i-caret"/></svg>
                  <hr>
                  <svg><use href="#i-zoomreg"/></svg>
                  <svg class="caret"><use href="#i-caret"/></svg>
                  <i></i>
                </div>
              </div>
              <div class="vscroll">
                <svg><use href="#i-sup"/></svg>
                <div class="thumb-bar mid"></div>
                <svg><use href="#i-sdown"/></svg>
              </div>
            </div>
            <div class="view-bar">
              <span>1 : 96</span>
              <svg><use href="#i-film"/></svg>
              <svg><use href="#i-box"/></svg>
              <svg><use href="#i-sun"/></svg>
              <svg><use href="#i-shadow"/></svg>
              <svg><use href="#i-x2"/></svg>
              <svg><use href="#i-crop"/></svg>
              <svg><use href="#i-glass"/></svg>
              <svg><use href="#i-bulb"/></svg>
              <svg><use href="#i-temp"/></svg>
              <svg><use href="#i-analytic"/></svg>
              <svg><use href="#i-lock"/></svg>
              <svg class="caret"><use href="#i-sleft"/></svg>
              <div class="track"><div class="thumb-bar"></div></div>
              <svg class="caret"><use href="#i-sright"/></svg>
              <svg class="grip" viewBox="0 0 12 12"><path d="M9 1h2v2H9zM5 5h2v2H5zM9 5h2v2H9zM1 9h2v2H1zM5 9h2v2H5zM9 9h2v2H9z" fill="#aaa"/></svg>
            </div>
          </section>
        </main>

        <footer class="status">
          <span class="hint">Hold button and move mouse to scroll the view. Hold Ctrl key to Zoom. Hold Shift key to Spin.</span>
          <svg><use href="#i-persons"/></svg>
          <label class="select workset"><select aria-label="Active workset"><option></option></select><svg class="caret"><use href="#i-down"/></svg></label>
          <svg class="requests"><use href="#i-pick"/></svg>
          <span class="count">:0</span>
          <svg class="opts"><use href="#i-options"/></svg>
          <svg><use href="#i-addset"/></svg>
          <label class="select model"><select aria-label="Design option"><option>Main Model</option></select><svg class="caret"><use href="#i-down"/></svg></label>
          <div class="filters">
            <svg><use href="#i-drag"/></svg>
            <svg><use href="#i-x2"/></svg>
            <svg><use href="#i-pin"/></svg>
            <svg><use href="#i-face"/></svg>
            <svg><use href="#i-seledit"/></svg>
            <svg><use href="#i-gear"/></svg>
            <svg><use href="#i-funnel"/></svg>
            <span>:0</span>
          </div>
        </footer>
      </div>

      <div class="taskbar">
        <div class="start"><svg viewBox="0 0 22 22"><path d="M0 3l9-1v9H0zM10 2l12-2v11H10zM0 12h9v9l-9-1zM10 12h12v10l-12-2z" fill="#fff"/></svg></div>
        <div class="search">
          <svg viewBox="0 0 22 26"><circle cx="12" cy="10" r="7" fill="none" stroke="#ddd" stroke-width="2"/><path d="M7 16l-5 7" stroke="#ddd" stroke-width="2"/></svg>
          <span>Type here to search</span>
          <svg class="star" viewBox="0 0 48 30"><path d="M17 0q2 0 3 2l4 9 9 2q3 1 1 3l-7 7 2 9H6l2-10-7-6q-2-2 1-3l9-2 4-9q1-2 2-2z" fill="#f7c948"/><circle cx="38" cy="3" r="2.500" fill="#d9643a"/><circle cx="45" cy="17" r="1.500" fill="#ddd"/></svg>
        </div>
        <div class="apps">
          <a href="#tasks"><svg viewBox="0 0 30 30"><path d="M4 4v8M4 8h14M18 4v8M4 16h14v9M25 4v3M25 10v9" fill="none" stroke="#ddd" stroke-width="2"/></svg></a>
          <a href="#copilot"><svg viewBox="0 0 30 30"><path d="M8 2h11l4 8-6 16H2z" fill="#2a7de1"/><path d="M11 2h8l3 7h-9L8 22H2z" fill="#3cc08b"/><path d="M18 9h8c3 0 3 4 2 8l-3 9h-8z" fill="#d86ca8"/></svg></a>
          <a href="#edge"><svg viewBox="0 0 30 30"><circle cx="15" cy="15" r="15" fill="#2f9fdb"/><path d="M15 0c12 0 18 12 13 18-4 4-10 2-9-2 1-5-3-7-7-6z" fill="#48d08a"/><circle cx="16" cy="15" r="5" fill="#1f1f1f"/></svg></a>
          <a href="#files"><svg viewBox="0 0 30 30"><path d="M2 2h10l3 3h13v22H2z" fill="#e0a93a"/><path d="M2 8h26v19H2z" fill="#f7cd5d"/></svg></a>
          <a href="#code"><svg viewBox="0 0 30 30"><path d="M6 2l18 8v16l-18 2z" fill="#2f9fe0"/></svg></a>
          <a href="#store"><svg viewBox="0 0 30 30"><path d="M9 5V1h12v4" fill="none" stroke="#2f9fe0" stroke-width="2"/><path d="M1 4h28v24H1z" fill="#f4f4f4"/><path d="M10 11h5v5h-5z" fill="#c4432e"/><path d="M16 11h5v5h-5z" fill="#7aa83a"/></svg></a>
          <a href="#mail"><svg viewBox="0 0 30 30"><path d="M15 0l14 8v20H1V8z" fill="#1767b5"/><path d="M15 0l14 10-14 9L1 10z" fill="#3b9be6"/></svg></a>
          <a href="#whatsapp"><svg viewBox="0 0 30 30"><circle cx="15" cy="15" r="14" fill="#2fb85a" stroke="#d9e6db" stroke-width="2"/><path d="M9 9c0 7 5 12 12 12" fill="none" stroke="#fff" stroke-width="4"/></svg></a>
          <a href="#revit" class="active"><svg viewBox="0 0 30 30"><path d="M0 0h30v30H0z" fill="#e9f0f7"/><path d="M8 5h9c6 0 6 8 2 9l4 9H8z" fill="#2467ad"/><path d="M12 8h4c3 0 3 4 0 4h-4z" fill="#fff"/></svg></a>
          <a href="#excel"><svg viewBox="0 0 30 30"><path d="M14 3h14v24H14z" fill="#e9f3ec" stroke="#3a8a5a"/><path d="M2 3l15-2v28L2 27z" fill="#1a7a44"/><path d="M6 10l7 9M13 10l-7 9" stroke="#fff" stroke-width="2"/></svg></a>
          <a href="#obs"><svg viewBox="0 0 30 30"><circle cx="15" cy="15" r="14" fill="#222" stroke="#ccc" stroke-width="2"/><path d="M10 5c-2 6 2 9 6 9M16 14c4-2 9 0 10 4M16 14c-1 5-6 8-10 6" fill="none" stroke="#ccc" stroke-width="3"/></svg></a>
        </div>
        <div class="tray">
          <span class="badge">2</span>
          <span class="weather">14°C &nbsp;غائم جزئيا</span>
          <svg viewBox="0 0 20 20"><path d="M4 11l6-6 6 6" fill="none" stroke="#ddd" stroke-width="2"/></svg>
          <svg viewBox="0 0 20 20"><path d="M2 13C5 6 11 3 18 3M8 16c1-4 5-7 10-7" fill="none" stroke="#ddd" stroke-width="2"/></svg>
          <svg viewBox="0 0 20 20"><path d="M1 3h18v12H1z" fill="#ddd"/></svg>
          <svg viewBox="0 0 20 20"><path d="M3 3h12v12H3zM15 6h4v7" fill="none" stroke="#ddd" stroke-width="2"/></svg>
          <svg viewBox="0 0 20 20"><path d="M2 8h4l5-5v14l-5-5H2zM14 6c2 2 2 6 0 8M17 4c3 4 3 8 0 12" fill="none" stroke="#ddd" stroke-width="2"/></svg>
          <svg viewBox="0 0 20 20"><path d="M5 0h10v18H5z" fill="#fff"/></svg>
          <span class="lang">ENG</span>
          <span class="clock">5:21 PM</span>
          <svg viewBox="0 0 24 20"><path d="M1 0h22v20H1z" fill="#f2f2f2"/><path d="M5 5h14M5 10h14" stroke="#444" stroke-width="2"/></svg>
        </div>
      </div>

      <div class="watermark">
        <svg viewBox="0 0 232 72" role="img" aria-label="مستقل">
          <g fill="none" stroke="#000" stroke-width="10" stroke-linecap="round">
            <path d="M22 33A17 17 0 1 0 39 49V7"/>
            <path d="M39 59H208"/>
            <circle cx="77" cy="43" r="15"/>
            <path d="M118 39l-3 18M139 39l-4 18M156 36l-5 21M172 34l-5 23"/>
            <circle cx="208" cy="50" r="16"/>
          </g>
          <g fill="#000"><circle cx="69" cy="11" r="7"/><circle cx="85" cy="11" r="7"/><circle cx="109" cy="25" r="7"/><circle cx="125" cy="25" r="7"/></g>
        </svg>
        <span>mostaql.com</span>
      </div>

      <h1 class="video-title">Automated draw levels and structure columns From Cad to Revit using dynamo script</h1>

      <div class="pill actions">
        <button aria-label="Share"><svg viewBox="0 0 28 28"><path d="M1 13L13 3v6c8 1 13 6 14 15-4-5-8-6-14-6v6z"/></svg></button>
        <button aria-label="Comments"><svg viewBox="0 0 28 28"><path d="M3 3h22q2 0 2 2v15q0 2-2 2H15l-5 4v-4H3q-2 0-2-2V5q0-2 2-2zM7 10h14M7 15h9"/></svg></button>
        <button aria-label="Dislike"><svg viewBox="0 0 28 28"><path d="M9 2h12l1 2h4v10h-5l-4 5-1 7h-3q-3-1-2-9H4q-3-1-2-4l2-8q1-3 5-3z"/></svg></button>
        <button aria-label="Like"><svg viewBox="0 0 28 28"><path d="M19 26H7l-1-2H2V14h5l4-5 1-7h3q3 1 2 9h7q3 1 2 4l-2 8q-1 3-5 3z"/></svg></button>
      </div>

      <div class="progress"><div class="loaded"></div><div class="played"></div><div class="knob"></div></div>

      <div class="controls">
        <button class="pill round" aria-label="Play"><svg viewBox="0 0 24 24"><path d="M3 1l20 11L3 23z" fill="#fff"/></svg></button>
        <button class="pill round" aria-label="Unmute"><svg viewBox="0 0 28 28"><path d="M14 2v24l-6-7-6-3q-2-2 0-4l6-3zM18 10l8 8M26 10l-8 8"/></svg></button>
        <span class="pill time">0:25 / 2:25</span>
        <button class="pill round more" aria-label="More"><svg viewBox="0 0 24 24"><path d="M5 16l7-8 7 8"/></svg></button>
        <div class="pill right">
          <label class="autoplay"><input type="checkbox" checked aria-label="Autoplay"><svg viewBox="0 0 18 18"><circle cx="9" cy="9" r="9" fill="#fff" stroke="none"/><path d="M7 5v8M11 5v8" stroke="#222"/></svg></label>
          <button aria-label="Subtitles"><svg viewBox="0 0 28 28"><path d="M2 4h24q1 0 1 1v18q0 1-1 1H2q-1 0-1-1V5q0-1 1-1zM6 14h3M12 14h10M6 19h10M19 19h3"/></svg></button>
          <button aria-label="Settings"><svg viewBox="0 0 28 28"><path d="M14 1l3 2 2 4 4-1 3 4-1 3v2l1 3-3 4-4-1-2 4-3 2-3-2-2-4-4 1-3-4 1-3v-2l-1-3 3-4 4 1 2-4z"/><circle cx="14" cy="14" r="4"/></svg></button>
          <button aria-label="Exit full screen"><svg viewBox="0 0 28 28"><path d="M4 4l7 7M11 4v7H4M25 25l-7-7M18 25v-7h7"/></svg></button>
        </div>
      </div>
    </div>
  </body>
</html>
```
FILE: styles.css
```css
* {
  box-sizing: border-box;
}
body {
  margin: 0;
  background: #000;
  color: #333;
  font-family: "Open Sans", "Noto Sans", sans-serif;
  font-size: 14px;
}
button,
input,
select {
  font: inherit;
  color: inherit;
  margin: 0;
}
button {
  border: none;
  background: transparent;
  padding: 0;
}
h1,
h2,
h3,
p,
ul {
  margin: 0;
  padding: 0;
}
svg {
  flex: none;
  display: block;
}
.sprite {
  position: absolute;
  width: 0;
  height: 0;
}
.caret {
  width: 12px;
  height: 12px;
}
.player {
  position: relative;
  height: 100vh;
  display: flex;
  flex-direction: column;
  overflow: hidden;
  padding-top: 24px;
}
.app {
  flex: 1;
  min-height: 0;
  display: flex;
  flex-direction: column;
  background: #eee;
}

/* drop-downs */
.select {
  display: grid;
  align-items: center;
  border: 1px solid #b5b5b5;
  background: #e2e2e2;
}
.select select {
  grid-area: 1 / 1;
  appearance: none;
  border: none;
  background: transparent;
  padding: 0 2px;
  width: 100%;
}
.select .caret {
  grid-area: 1 / 1;
  justify-self: end;
  margin-right: 4px;
}

/* title bar */
.titlebar {
  height: 38px;
  flex: none;
  display: flex;
  align-items: center;
  padding-bottom: 6px;
  background: #cdcdcd;
  border-top: 2px solid #aaa;
}
.qat {
  display: flex;
  align-items: center;
  gap: 5px;
  padding-left: 5px;
  width: 899px;
}
.qat svg {
  width: 24px;
  height: 22px;
}
.qat svg.caret {
  width: 12px;
  height: 12px;
}
.qat .qat-first {
  margin-right: 6px;
}
.qat i {
  width: 1px;
  height: 28px;
  margin: 0 2px;
  background: #bbb;
}
.qat b {
  width: 24px;
  text-align: center;
  font-size: 22px;
  line-height: 24px;
}
.window-title {
  color: #555;
  line-height: 20px;
  margin-bottom: 4px;
  white-space: nowrap;
}
.infocenter {
  flex: 1;
  display: flex;
  align-items: center;
  justify-content: flex-end;
  gap: 12px;
  padding-right: 8px;
}
.infocenter span {
  width: 70px;
}
.infocenter svg {
  width: 18px;
  height: 18px;
}
.infocenter svg.caret {
  width: 12px;
}
.infocenter .help {
  margin-left: 18px;
}
.infocenter .win {
  margin-left: 116px;
}
.infocenter svg.close {
  width: 14px;
  height: 12px;
}

/* ribbon tabs */
.tabs {
  height: 25px;
  flex: none;
  display: flex;
  align-items: center;
  background: #cdcdcd;
}
.tabs button {
  height: 25px;
  padding: 0 12px;
  color: #444;
}
.tabs button:nth-child(n + 10) {
  padding: 0 14px;
}
.tabs .file {
  width: 57px;
  margin-right: 2px;
  background: #1f78b4;
  color: #fff;
}
.tabs .active {
  background: #eee;
}
.tabs .min {
  width: 20px;
  height: 14px;
  margin: 0 4px 0 22px;
}

/* ribbon */
.ribbon {
  flex: none;
  display: grid;
  grid-template-columns: 73px 778px 121px 255px 133px 117px 64px 74px 58px 62px 147px;
  height: 121px;
  background: #eee;
  border-bottom: 1px solid #ccc;
}
.panel {
  display: flex;
  flex-direction: column;
  border-right: 1px solid #ddd;
}
.panel:last-child {
  border: none;
}
.panel h2 {
  display: flex;
  align-items: center;
  justify-content: center;
  gap: 4px;
  font-size: 14px;
  font-weight: 400;
  line-height: 20px;
  white-space: nowrap;
}
.tools {
  height: 99px;
  display: flex;
  justify-content: center;
  padding-top: 3px;
}
.big {
  height: 90px;
  padding: 3px 4px 0;
  display: flex;
  flex-direction: column;
  align-items: center;
  line-height: 20px;
  white-space: nowrap;
}
.big br {
  display: block;
}
.big svg {
  width: 38px;
  height: 38px;
  margin-bottom: 7px;
}
.big:disabled {
  color: #b5b5b5;
}
.modify {
  width: 52px;
  padding: 2px 0 0;
  border: 1px solid #3c7fb1;
  background: #acd2f0;
}
.stack {
  display: flex;
  flex-direction: column;
}
.stack.middle {
  padding-top: 15px;
}
.stack button {
  height: 31px;
  display: flex;
  align-items: center;
  gap: 7px;
  white-space: nowrap;
}
.stack svg {
  width: 20px;
  height: 20px;
}
.stack svg.caret {
  width: 12px;
  height: 12px;
}
.settings {
  display: grid;
  grid-template-columns: 72px 172px 164px 217px 65px 76px 12px;
  justify-content: start;
}
.stack.first {
  padding-left: 2px;
}
.ruled {
  height: 90px;
  padding-left: 12px;
  border-left: 1px solid #ccc;
}
.settings > .caret {
  margin-top: 60px;
}
.location {
  padding-right: 4px;
}
.design .big {
  margin-right: 2px;
}
.design .stack .select {
  width: 186px;
  height: 27px;
  margin-top: 2px;
  background: #f4f4f4;
  border-color: #ddd;
  color: #888;
}
.project .stack {
  padding-left: 6px;
}

/* type bar */
.options-bar {
  height: 35px;
  flex: none;
  padding: 0 10px;
  border-bottom: 2px solid #ccc;
}
.options-bar .select {
  width: 231px;
  height: 30px;
}

/* workspace */
.workspace {
  flex: 1;
  min-height: 0;
  display: grid;
  grid-template-columns: 275px 1fr;
}
.side {
  display: flex;
  flex-direction: column;
  min-height: 0;
  border-right: 1px solid #ddd;
}
.side h3 {
  height: 25px;
  display: flex;
  align-items: center;
  justify-content: space-between;
  padding: 0 6px 0 4px;
  font-size: 14px;
  font-weight: 400;
}
.side h3 svg {
  width: 12px;
  height: 12px;
}
.properties {
  height: 390px;
  flex: none;
  border-bottom: 2px solid #ccc;
}
.type {
  display: flex;
  align-items: center;
  gap: 6px;
  height: 87px;
  padding: 0 4px 0 6px;
  border-top: 1px solid #ddd;
}
.type .thumb {
  width: 82px;
  height: 82px;
  display: grid;
  place-items: center;
  border: 1px solid #d2d2d2;
}
.type .thumb svg {
  width: 36px;
  height: 36px;
}
.type p {
  flex: 1;
  line-height: 20px;
}
.instance {
  display: flex;
  align-items: center;
  gap: 5px;
  height: 28px;
  padding-left: 2px;
}
.instance .select {
  width: 174px;
  height: 28px;
}
.instance button {
  display: flex;
  align-items: center;
  gap: 4px;
  margin-bottom: 2px;
  white-space: nowrap;
}
.instance button svg {
  width: 17px;
  height: 18px;
}
.props {
  display: grid;
  grid-template-columns: 250px 19px;
  gap: 2px;
  height: 214px;
  margin-top: 3px;
  overflow: hidden;
}
.group {
  display: flex;
  justify-content: space-between;
  height: 22px;
  padding: 0 3px 0 4px;
  line-height: 21px;
  background: #d8d8d8;
}
.props table {
  width: 250px;
  table-layout: fixed;
  border-collapse: collapse;
  background: #fff;
}
.props tr {
  height: 24px;
}
.props th,
.props td {
  padding: 0 0 0 2px;
  border-bottom: 1px dashed #bbb;
  border-right: 1px dashed #ddd;
  font-weight: 400;
  text-align: left;
  line-height: 22px;
  white-space: nowrap;
}
.props th {
  width: 118px;
  padding-left: 12px;
}
.props th span {
  float: right;
  margin-right: 2px;
}
.props td:last-child {
  width: 15px;
  border-right: none;
}
.props input {
  display: block;
  width: 100%;
  height: 23px;
  padding: 0;
  border: 1px solid #333;
  background: #fff;
}
.props td button {
  display: block;
  width: 100%;
  height: 22px;
  border: 1px solid #aaa;
  background: #ddd;
}
.vscroll {
  display: flex;
  flex-direction: column;
  align-items: center;
  padding: 4px 0;
  background: #f0f0f0;
}
.vscroll svg {
  width: 12px;
  height: 12px;
}
.thumb-bar {
  background: #cdcdcd;
}
.vscroll .thumb-bar {
  width: 100%;
  margin-bottom: auto;
}
.vscroll .short {
  height: 40px;
  margin-top: 5px;
}
.vscroll .long {
  height: 266px;
  margin-top: 4px;
}
.vscroll .mid {
  height: 21px;
  margin-top: 339px;
}
.props-foot {
  display: flex;
  align-items: flex-start;
  justify-content: space-between;
  padding: 1px 4px 0;
}
.props-foot a {
  color: #2b6cb0;
  line-height: 20px;
}
.props-foot button {
  width: 86px;
  height: 26px;
  background: #ccc;
  color: #888;
}

/* project browser */
.browser {
  flex: 1;
  min-height: 0;
  display: flex;
  flex-direction: column;
}
.browser-body {
  flex: 1;
  min-height: 0;
  display: grid;
  grid-template-columns: 253px 19px;
}
.tree {
  overflow: hidden;
  background: #fff;
}
.tree,
.tree ul {
  position: relative;
  list-style: none;
}
.tree::before,
.tree ul::before {
  content: "";
  position: absolute;
  top: 0;
  bottom: 10px;
  left: 12px;
  border-left: 1px dashed #bbb;
}
.row {
  position: relative;
  display: flex;
  align-items: center;
  height: 22px;
  padding-left: 6px;
  white-space: nowrap;
}
.row svg {
  width: 18px;
  height: 18px;
  margin: 0 7px 0 9px;
}
.hl {
  padding: 0 3px;
  margin-left: -3px;
  background: #e6e6e6;
}
.toggle {
  width: 13px;
  height: 13px;
  border: 1px solid #888;
  background: linear-gradient(#666, #666) center / 7px 1px no-repeat #f5f5f5;
}
.toggle.plus {
  background: linear-gradient(#555, #555) center / 9px 1px no-repeat,
    linear-gradient(#555, #555) center / 1px 9px no-repeat, #f5f5f5;
}
.no-toggle {
  width: 13px;
  border-bottom: 1px dashed #bbb;
}
.branch .row {
  padding-left: 32px;
}
.branch .toggle {
  margin-right: 15px;
}
.branch .toggle::after {
  content: "";
  display: block;
  width: 10px;
  margin: 5px 0 0 15px;
  border-top: 1px dashed #bbb;
}
.tree .branch::before {
  left: 38px;
  bottom: 100px;
}
.tree .leaves::before {
  left: 64px;
}
.leaves li {
  height: 22px;
  line-height: 22px;
  display: flex;
  align-items: center;
  padding-left: 65px;
}
.leaves li::before {
  content: "";
  width: 16px;
  margin-right: 5px;
  border-top: 1px dashed #bbb;
}
.hscroll {
  flex: none;
  display: flex;
  align-items: center;
  width: 253px;
  height: 22px;
  padding: 0 4px 2px 6px;
}
.hscroll svg {
  width: 12px;
  height: 12px;
}
.hscroll .thumb-bar {
  width: 194px;
  height: 19px;
  margin: 0 auto 0 5px;
}

/* open documents */
.documents {
  display: flex;
  flex-direction: column;
  min-width: 0;
  margin-left: 2px;
}
.doc-tabs {
  display: flex;
  align-items: center;
  height: 25px;
  flex: none;
  padding-right: 4px;
  background: #cdcdcd;
}
.doc-tabs button {
  display: flex;
  align-items: center;
  gap: 9px;
  width: 160px;
  height: 25px;
  padding: 0 6px 0 8px;
  color: #666;
}
.doc-tabs svg {
  width: 18px;
  height: 18px;
}
.doc-tabs .active {
  background: #fff;
  color: #222;
  font-weight: 700;
}
.doc-tabs svg.x {
  width: 13px;
  height: 13px;
  margin-left: auto;
}
.doc-tabs svg.caret {
  width: 12px;
  height: 12px;
  margin-left: auto;
}
.view {
  flex: 1;
  min-height: 0;
  display: grid;
  grid-template-columns: 1fr 21px;
  background: #fff;
}
.canvas {
  position: relative;
  background: #fff;
}

/* levels sit at their elevation on the canvas */
.level {
  position: absolute;
  left: 157px;
  width: 810px;
  height: 18px;
}
.l06 { top: 25px; }
.l05 { top: 106px; }
.l04 { top: 187px; }
.l03 { top: 267px; }
.l02 { top: 348px; }
.l01 { top: 452px; }
.l00 { top: 491px; }
.line {
  position: absolute;
  top: 8px;
  left: 0;
  width: 793px;
  height: 2px;
}
.line line {
  stroke: #6a6a6a;
  stroke-width: 2px;
  stroke-dasharray: 17 4 3 4 17 4 3 4 17 4 2 4;
}
.selected .line line {
  stroke: #24477d;
}
.faded .line line {
  stroke: #d2d2d2;
}
.bubble {
  position: absolute;
  right: 0;
  width: 18px;
  height: 18px;
}
.name,
.height {
  position: absolute;
  right: 25px;
  font-family: "Liberation Sans", "DejaVu Sans", sans-serif;
  font-size: 11px;
  line-height: 12px;
  white-space: nowrap;
}
.name {
  top: -3px;
  font-size: 9px;
}
.height {
  top: 9px;
  font-weight: 700;
}
.selected .name {
  top: -8px;
  right: 19px;
  padding: 4px 5px;
  border: 1px solid #93a9c9;
}
.move {
  position: absolute;
  left: 851px;
  top: 194px;
  width: 38px;
  height: 38px;
}
.navbar {
  position: absolute;
  right: 2px;
  top: 2px;
  display: flex;
  flex-direction: column;
  align-items: center;
  width: 35px;
  height: 117px;
  padding: 2px;
  border: 2px solid #bbb;
  border-radius: 5px;
  background: #f4f4f4;
}
.navbar i {
  width: 8px;
  height: 8px;
  align-self: flex-end;
  border: 2px solid #bbb;
  border-radius: 50%;
}
.navbar svg {
  width: 24px;
  height: 26px;
  margin-top: 7px;
}
.navbar svg.caret {
  width: 8px;
  height: 8px;
  margin-top: 2px;
}
.navbar hr {
  width: 26px;
  margin: 2px 0 0;
  border: none;
  border-top: 1px solid #ccc;
}
.navbar hr + svg {
  width: 18px;
  height: 18px;
}
.navbar .caret + i {
  margin-top: auto;
}
.view > .vscroll {
  width: 18px;
}

.view-bar {
  display: flex;
  align-items: center;
  gap: 5px;
  height: 24px;
  flex: none;
  padding: 0 4px 2px 30px;
  background: #f0f0f0;
  border-bottom: 2px solid #ccc;
}
.view-bar span {
  width: 59px;
}
.view-bar svg {
  width: 20px;
  height: 18px;
}
.view-bar svg.caret,
.view-bar svg.grip {
  width: 12px;
  height: 12px;
}
.view-bar .track {
  flex: 1;
  height: 20px;
  padding-left: 36%;
}
.view-bar .thumb-bar {
  width: 21px;
  height: 20px;
}
.view-bar .grip {
  margin-left: 6px;
}

/* status bar */
.status {
  display: flex;
  align-items: center;
  height: 32px;
  flex: none;
  padding-left: 3px;
  background: #cdcdcd;
}
.status svg {
  width: 20px;
  height: 20px;
}
.status .hint {
  width: 686px;
  white-space: nowrap;
}
.status .select {
  height: 23px;
  border: none;
  background: #fff;
  color: #777;
}
.status .select svg {
  width: 12px;
  height: 12px;
}
.status .workset {
  width: 256px;
  margin: 0 8px;
}
.status .count {
  width: 39px;
  padding-left: 4px;
}
.status .opts {
  margin-right: 10px;
}
.status .model {
  width: 254px;
  margin-left: 8px;
}
.filters {
  display: flex;
  align-items: center;
  gap: 10px;
  margin: 0 78px 0 auto;
}
.filters span {
  margin-left: -4px;
}

/* windows taskbar, cut off by the frame */
.taskbar {
  display: flex;
  height: 25px;
  flex: none;
  overflow: hidden;
  border-top: 1px solid #555;
  background: #1f1f1f;
  color: #ddd;
}
.taskbar svg {
  width: 20px;
  height: 20px;
}
.start {
  width: 61px;
  padding: 14px 0 0 20px;
}
.search {
  display: flex;
  align-items: flex-start;
  width: 360px;
  padding: 11px 0 0 19px;
  background: #323232;
}
.taskbar .search svg {
  width: 20px;
  height: 24px;
}
.search span {
  margin-left: 10px;
  font-size: 18px;
  line-height: 26px;
  white-space: nowrap;
}
.taskbar .search .star {
  width: 48px;
  height: 30px;
  margin: -2px 28px 0 auto;
}
.apps {
  display: flex;
}
.apps a {
  width: 62px;
  height: 46px;
  padding: 10px 14px;
}
.apps .active {
  background: #444;
}
.apps svg {
  width: 30px;
  height: 30px;
}
.tray {
  display: flex;
  align-items: flex-start;
  gap: 9px;
  margin-left: auto;
  padding: 13px 28px 0 0;
  font-size: 15px;
  white-space: nowrap;
}
.badge {
  width: 15px;
  height: 20px;
  margin-top: -3px;
  border-radius: 8px;
  background: #c03a34;
  color: #fff;
  font-size: 11px;
  text-align: center;
}
.weather {
  width: 164px;
}
.clock {
  margin: -11px 22px 0 14px;
}

/* watermark */
.watermark {
  position: absolute;
  left: 845px;
  top: 948px;
  opacity: 0.1;
}
.watermark svg {
  width: 232px;
  height: 72px;
}
.watermark span {
  display: block;
  color: #000;
  font-family: Inter, "Liberation Sans", sans-serif;
  font-size: 32px;
  font-weight: 600;
  line-height: 38px;
}

/* video player controls */
.video-title {
  position: absolute;
  top: 27px;
  right: 30px;
  color: #fff;
  font-family: Roboto, sans-serif;
  font-size: 25px;
  font-weight: 700;
  line-height: 30px;
  text-shadow: 0 0 3px rgba(0, 0, 0, 0.8);
}
.pill {
  display: flex;
  align-items: center;
  height: 50px;
  border-radius: 25px;
  background: rgba(0, 0, 0, 0.3);
  color: #fff;
}
.pill svg {
  width: 28px;
  height: 28px;
  fill: none;
  stroke: #fff;
  stroke-width: 2;
}
.actions {
  position: absolute;
  left: 15px;
  top: 930px;
  display: grid;
  grid-template-columns: 60px 60px 50px 28px;
  width: 230px;
  padding-left: 21px;
}
.actions svg {
  stroke-width: 3;
}
.progress {
  position: absolute;
  left: 15px;
  right: 15px;
  top: 1004px;
  height: 5px;
  border-radius: 3px;
  background: rgba(0, 0, 0, 0.5);
}
.loaded,
.played {
  position: absolute;
  left: 0;
  top: 0;
  height: 5px;
}
.loaded {
  width: 37%;
  background: #aaa;
}
.played {
  width: 17%;
  background: #ff0033;
}
.knob {
  position: absolute;
  left: 17%;
  top: -5px;
  width: 15px;
  height: 15px;
  margin-left: -4px;
  border-radius: 50%;
  background: #ff0033;
}
.controls {
  position: absolute;
  left: 15px;
  right: 15px;
  top: 1020px;
  display: flex;
  align-items: center;
  gap: 15px;
}
.round {
  width: 50px;
  justify-content: center;
}
.time {
  width: 122px;
  margin-left: -4px;
  justify-content: center;
  font-family: Roboto, sans-serif;
  font-size: 17px;
  font-weight: 500;
  text-shadow: 0 0 2px rgba(0, 0, 0, 0.6);
}
.round.more {
  position: absolute;
  left: 50%;
  margin-left: -25px;
  background: rgba(0, 0, 0, 0.45);
}
.more svg {
  stroke-width: 3;
}
.right {
  width: 225px;
  width: 250px;
  margin-left: auto;
  padding: 0 21px 0 18px;
  justify-content: space-between;
}
.right svg {
  stroke-width: 2;
}
.autoplay {
  display: grid;
  width: 34px;
}
.autoplay input {
  grid-area: 1 / 1;
  appearance: none;
  width: 34px;
  height: 14px;
  margin: 2px 0;
  border-radius: 7px;
  background: rgba(255, 255, 255, 0.1);
}
.autoplay svg {
  grid-area: 1 / 1;
  width: 18px;
  height: 18px;
}
```
